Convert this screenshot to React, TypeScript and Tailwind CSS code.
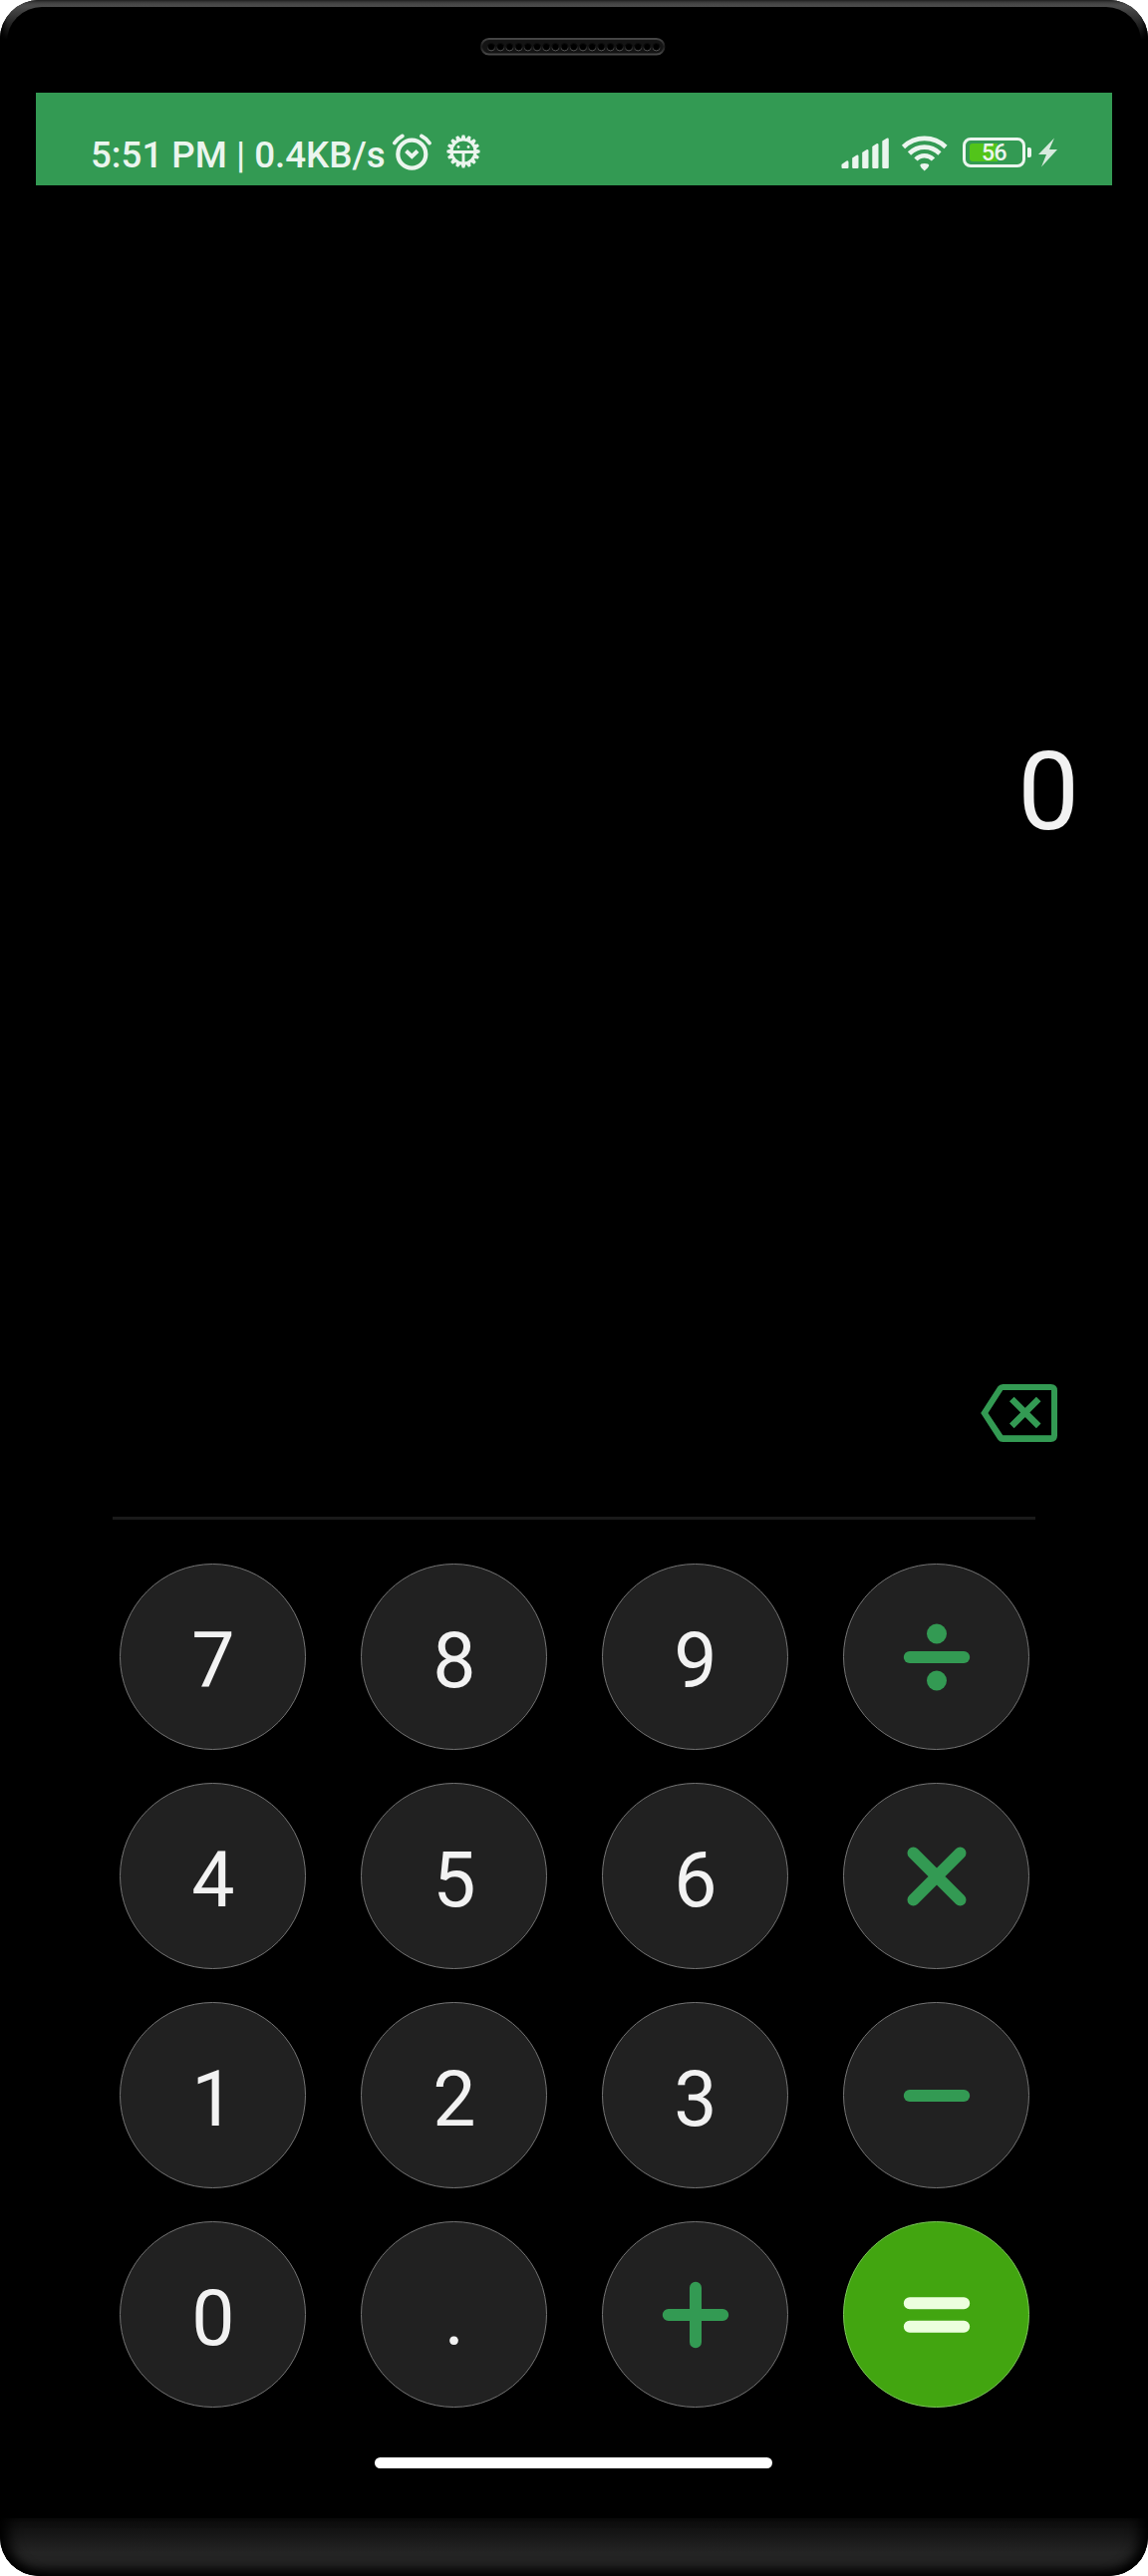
import React from "react";

const GREEN = "#339a53";
const LIGHT = "#ebf5ee";

function Speaker() {
  return (
    <svg className="-ml-[2px]" width="186" height="18" viewBox="0 0 186 18" aria-hidden="true">
      <defs>
        <linearGradient id="rim" x1="0" y1="0" x2="0" y2="1">
          <stop offset="0" stopColor="#454545" />
          <stop offset="0.5" stopColor="#1c1c1c" />
          <stop offset="1" stopColor="#484848" />
        </linearGradient>
        <linearGradient id="hole" x1="0" y1="0" x2="0" y2="1">
          <stop offset="0.35" stopColor="#0c0c0c" />
          <stop offset="1" stopColor="#5a5a5a" />
        </linearGradient>
      </defs>
      <rect x="1" y="1" width="183.500" height="15.500" rx="7.750" fill="#141414" stroke="url(#rim)" strokeWidth="2" />
      {Array.from({ length: 19 }, (_, i) => (
        <circle key={i} cx={11 + i * 9.2} cy="9.200" r="3.700" fill="#000" stroke="url(#hole)" strokeWidth="1" />
      ))}
    </svg>
  );
}

function AlarmIcon() {
  return (
    <svg className="ml-[7px] shrink-0" width="40" height="38" viewBox="0 0 40 38" fill="none" stroke={LIGHT} aria-hidden="true">
      <circle cx="20.300" cy="20.700" r="14" strokeWidth="4.200" />
      <path d="M14.500 17.500L20.300 23L26 17.500" strokeWidth="4" />
      <path d="M2.900 9.500Q6 5 10.700 2.500M37.900 9.500Q35 5 30 2.500" strokeWidth="3.900" strokeLinecap="round" />
    </svg>
  );
}

function BugGearIcon() {
  const teeth = Array.from({ length: 16 }, (_, i) => i * 22.5);
  return (
    <svg className="ml-[14px] shrink-0" width="36" height="38" viewBox="-18 -18 36 38" fill="none" stroke={LIGHT} aria-hidden="true">
      <circle r="11.900" strokeWidth="2.900" />
      {teeth.map((a) => (
        <path key={a} d="M-2.500 -12.500L-1.300 -16.600H1.300L2.500 -12.500Z" fill={LIGHT} stroke="none" transform={`rotate(${a})`} />
      ))}
      <path d="M-12 0.500H12M0 0.500V12" strokeWidth="2.900" />
      <circle cx="-5" cy="-4.500" r="1.400" fill={LIGHT} stroke="none" />
      <circle cx="5" cy="-4.500" r="1.400" fill={LIGHT} stroke="none" />
    </svg>
  );
}

function SignalIcon() {
  return (
    <svg width="49" height="38" viewBox="0 0 49 38" fill={LIGHT} aria-hidden="true">
      <path d="M0.500 31L5.500 27.500Q7.500 26.500 7.500 29V34Q7.500 35 6.500 35H1.500Q0.500 35 0.500 34Z" />
      <path d="M11.200 24.500L15.500 21.700Q17.500 21 17.500 23V34Q17.500 35 16.500 35H12.200Q11.200 35 11.200 34Z" />
      <path d="M21.200 19L25.500 16.200Q27.500 15.500 27.500 17.500V34Q27.500 35 26.500 35H22.200Q21.200 35 21.200 34Z" />
      <path d="M31.300 13L35.500 10.300Q37.500 9.500 37.500 11.500V34Q37.500 35 36.500 35H32.300Q31.300 35 31.300 34Z" />
      <path d="M41.300 7.500L45.800 4.800Q47.800 4 47.800 6V34Q47.800 35 46.800 35H42.300Q41.300 35 41.300 34Z" />
    </svg>
  );
}

function WifiIcon() {
  return (
    <svg className="ml-[11px]" width="48" height="38" viewBox="0 0 48 38" fill="none" stroke={LIGHT} strokeWidth="4.600" aria-hidden="true">
      <path d="M2.500 13.500Q11.500 4.900 23.700 4.900T45 13.500" />
      <path d="M8.500 20Q15 13.600 23.700 13.600T39 20" />
      <path d="M15 26Q18.500 22.200 23.700 22.200T32.500 26" />
      <path d="M19.300 32Q19.300 30 23.700 30T28.300 32Q27.700 34 23.700 37.500Q19.700 34 19.300 32Z" fill={LIGHT} stroke="none" />
    </svg>
  );
}

function Battery() {
  return (
    <div className="ml-[14px] flex items-center">
      <div className="relative flex h-[30px] w-[63px] items-center justify-center rounded-[8px] border-[3px] border-[#ebf5ee]">
        <div className="absolute left-[4px] top-[3px] h-[18px] w-[28px] rounded-l-[3px] bg-[#52c41a]" />
        <span className="relative pt-px text-[23px] font-medium leading-none tracking-[-0.5px] text-[#ebf5ee]">56</span>
      </div>
      <div className="ml-[2px] h-[10px] w-[4px] rounded-r-[2px] rounded-l-[1px] bg-[#ebf5ee]" />
      <svg className="ml-[7px]" width="20" height="30" viewBox="0 0 20 30" fill="#d8ebde" aria-hidden="true">
        <path d="M16 0.500L0 17H8L3 29.500L19 12H11Z" />
      </svg>
    </div>
  );
}

function StatusBar() {
  return (
    <header className="mx-[36px] flex h-[93px] items-end justify-between bg-[#339a53] pb-[14px] pl-[55px] pr-[54px]">
      <div className="flex h-[38px] items-center">
        <span className="w-[295px] whitespace-nowrap pt-[5px] text-[36.700px] font-medium leading-[38px] text-[#ebf5ee]">
          5:51 PM | 0.4KB/s
        </span>
        <AlarmIcon />
        <BugGearIcon />
      </div>
      <div className="flex h-[38px] items-center">
        <SignalIcon />
        <WifiIcon />
        <Battery />
      </div>
    </header>
  );
}

function BackspaceIcon() {
  return (
    <svg width="77" height="58" viewBox="0 0 77 58" fill={GREEN} aria-hidden="true">
      <path
        fillRule="evenodd"
        d="M0.200 29L17.300 2.600Q19 0 22.500 0H70.500Q77 0 77 6.500V51.500Q77 58 70.500 58H22.500Q19 58 17.300 55.400ZM7.500 29L22.300 51.300H71V6H22.300Z"
      />
      <path d="M31.300 15L58.200 41.900M58.200 15L31.300 41.900" fill="none" stroke={GREEN} strokeWidth="6.500" />
    </svg>
  );
}

function OperatorIcon({ name }: { name: string }) {
  return (
    <svg width="68" height="68" viewBox="-34 -34 68 68" strokeWidth="12" strokeLinecap="round" fill={GREEN} stroke={GREEN} aria-hidden="true">
      {name === "divide" && (
        <>
          <path d="M-27.200 0H27.200" />
          <circle cy="-23.500" r="10" stroke="none" />
          <circle cy="23.500" r="10" stroke="none" />
        </>
      )}
      {name === "multiply" && <path d="M-23.500 -23.500L23.500 23.500M23.500 -23.500L-23.500 23.500" />}
      {name === "minus" && <path d="M-27.200 0H27.200" />}
      {name === "plus" && <path d="M-27.200 0H27.200M0 -27.200V27.200" />}
      {name === "equals" && <path d="M-27.200 -11.800H27.200M-27.200 11.800H27.200" stroke="#ecffde" />}
    </svg>
  );
}

const KEYS = [
  "7", "8", "9", "divide",
  "4", "5", "6", "multiply",
  "1", "2", "3", "minus",
  "0", ".", "plus", "equals",
];

function Key({ value }: { value: string }) {
  const isOperator = value.length > 1;
  return (
    <button
      aria-label={value}
      className={
        "flex h-[187px] w-[187px] items-center justify-center rounded-full border " +
        (value === "equals" ? "border-[#7cc65a] bg-[#42a510]" : "border-[#747474] bg-[#212121]")
      }
    >
      {isOperator ? (
        <span className="pl-px pt-px"><OperatorIcon name={value} /></span>
      ) : (
        <span className="pl-px pt-[8px] text-[77px] leading-[90px] text-[#f2f2f2]">{value}</span>
      )}
    </button>
  );
}

export default function App() {
  return (
    <div className="w-[1152px] bg-white font-['Roboto',sans-serif]">
      <div className="flex h-[2585px] flex-col overflow-hidden rounded-[39px] bg-black">
        <div className="h-[93px] shrink-0 bg-[linear-gradient(to_bottom,#484848_0px,#4a4a4a_7px,#000_40px)] px-[7px] pt-[7px] shadow-[inset_5px_0_5px_-1px_#000,inset_-5px_0_5px_-1px_#000]">
          <div className="flex h-full justify-center rounded-t-[35px] bg-black pt-[31px]">
            <Speaker />
          </div>
        </div>
        <StatusBar />
        <main className="flex flex-1 flex-col">
          <div className="flex h-[1203px] items-start justify-end pr-[69px] pt-[544px]">
            <span className="text-[110px] leading-[130px] text-[#f2f2f2]">0</span>
          </div>
          <div className="flex h-[133px] items-start justify-end pr-[91px]">
            <button aria-label="backspace">
              <BackspaceIcon />
            </button>
          </div>
          <div className="mx-[113px] h-[3px] bg-[#1a1a1a]" />
          <div className="ml-[120px] mt-[44px] grid w-[913px] grid-cols-4 gap-x-[55px] gap-y-[33px]">
            {KEYS.map((k) => (
              <Key key={k} value={k} />
            ))}
          </div>
          <div className="ml-[376px] mt-[50px] h-[11px] w-[399px] rounded-full bg-white" />
        </main>
        <footer className="h-[58px] shrink-0 rounded-b-[39px] bg-[linear-gradient(to_bottom,#0c0c0c_0%,#151515_25%,#242424_60%,#242424_100%)] shadow-[inset_14px_0_14px_-6px_#000,inset_-14px_0_14px_-6px_#000,inset_0_-10px_12px_-4px_#000]" />
      </div>
    </div>
  );
}
